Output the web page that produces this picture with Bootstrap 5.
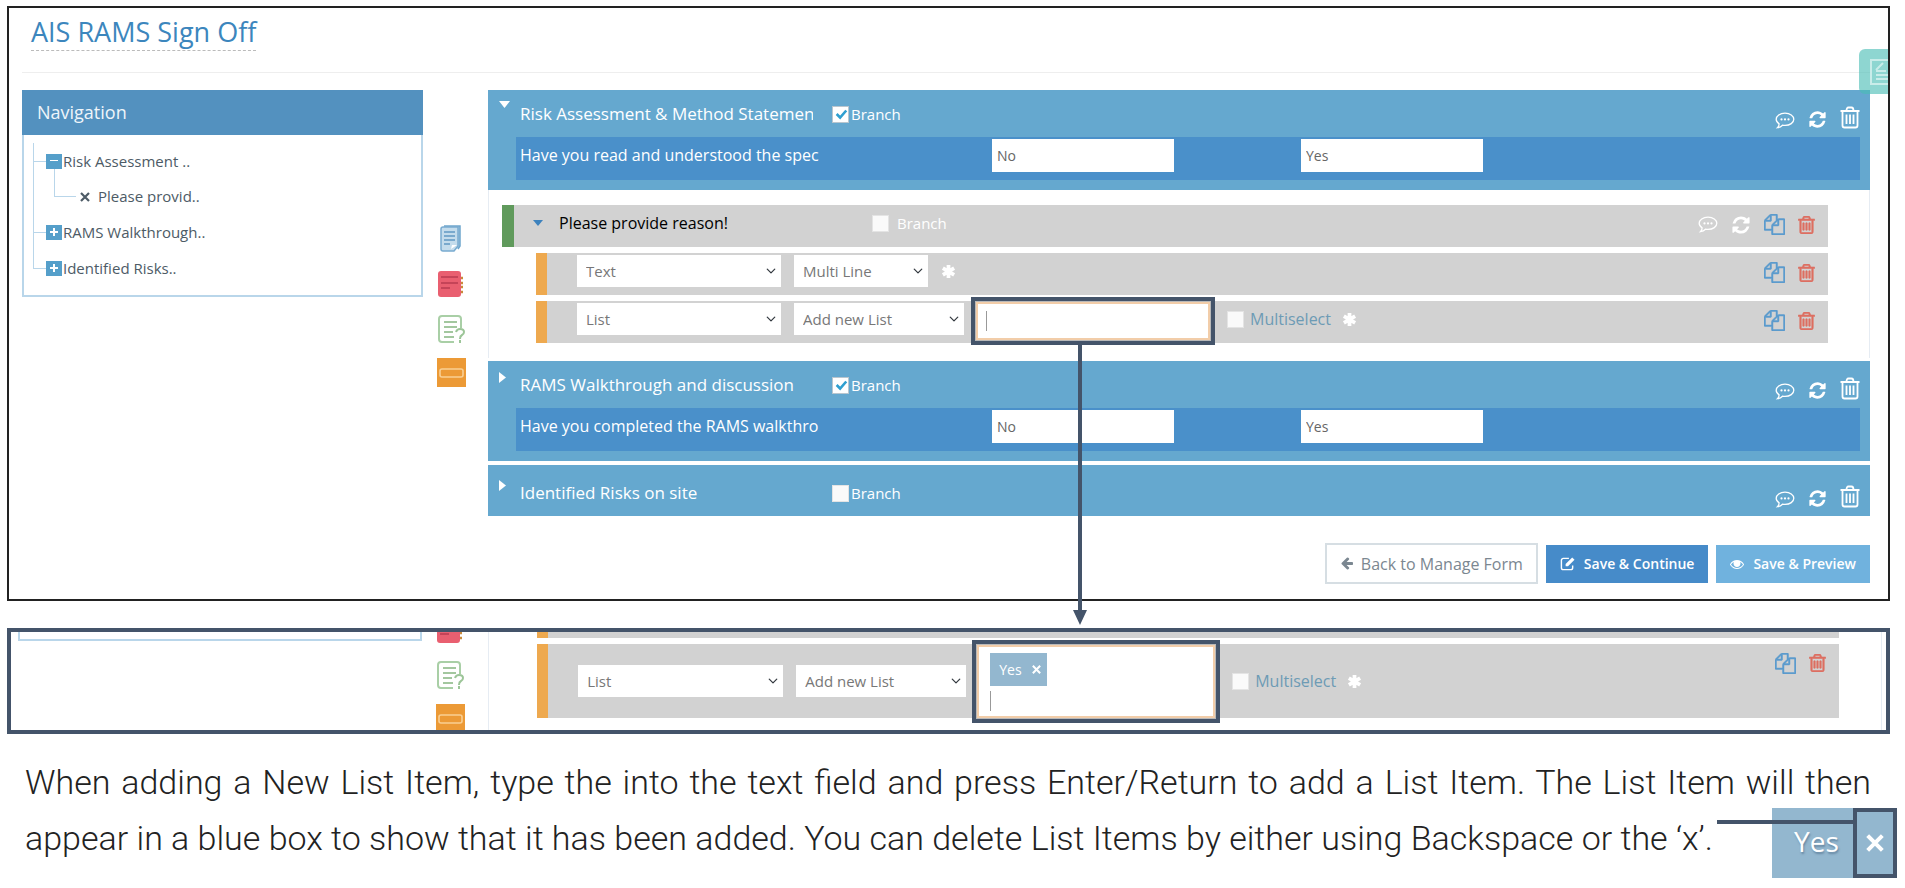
<!DOCTYPE html>
<html lang="en">
<head>
<meta charset="utf-8">
<meta name="viewport" content="width=device-width, initial-scale=1">
<title>AIS RAMS Sign Off</title>
<link href="https://cdn.jsdelivr.net/npm/bootstrap@5.3.0/dist/css/bootstrap.min.css" rel="stylesheet">
<style>
  :root { --slate: #44546a; --sky: #65a8cf; --deep: #4a90ca; --ash: #d2d2d2; --line: #b9d6ea; }
  body { font-family: "Open Sans", "Noto Sans", sans-serif; font-size: 15px; color: #555; background: #fff; padding: 6px 15px 0 7px; min-height: 100vh; }
  svg { display: block; fill: currentColor; }
  .icon-btn { border: 0; background: none; padding: 0; color: inherit; display: block; }

  .screen { border: 2px solid #222; padding: 0 18px 15px 13px; }
  .form-title { font-size: 27px; line-height: 36px; font-weight: 500; color: #3c86bd; margin: 6px 0 0 9px; border-bottom: 1px dashed #bbb; display: inline-block; }
  .title-bar { border-bottom: 1px solid #eee; height: 65px; margin-bottom: 17px; }
  .side-tab { position: absolute; top: 41px; right: 0; width: 29px; height: 45px; overflow: hidden; border-radius: 6px 0 0 6px; background: rgba(72, 189, 180, .62); color: #c9ece9; padding: 0 0 0 11px; z-index: 2; }

  .work { display: grid; grid-template-columns: minmax(0, 401fr) 65px minmax(0, 1382fr); align-items: start; }
  .nav-box { border: 2px solid var(--line); border-top: 0; }
  .nav-box h2 { font-size: 18px; line-height: 45px; margin: 0 -2px; padding-left: 15px; background: #5391bf; color: #eef5fa; font-weight: 400; }
  .tree { list-style: none; margin: 8px 0 9px 9px; padding: 0; color: #4d5b66; font-size: 15px; }
  .tree ul { list-style: none; margin: 0; padding: 0; }
  .tree li { position: relative; }
  .tree .node { display: flex; align-items: center; height: 36px; padding-left: 13px; }
  .tree > li::before { content: ""; position: absolute; left: 0; top: 0; bottom: 0; border-left: 1px solid var(--line); }
  .tree > li:last-child::before { bottom: 50%; }
  .tree > li > .node::before { content: ""; position: absolute; left: 0; top: 18px; width: 13px; border-top: 1px solid var(--line); }
  .tree ul .node { padding-left: 46px; height: 35px; gap: 7px; }
  .tree ul .node::before { content: ""; position: absolute; left: 21px; top: -10px; width: 22px; height: 28px; border: solid var(--line); border-width: 0 0 1px 1px; }
  .toggle { width: 16px; height: 15px; background: #559fca; color: #fff; border: 0; padding: 0; display: grid; place-items: center; margin-right: 1px; }
  .tree a { color: inherit; text-decoration: none; }

  .tools { padding: 134px 8px 0 0; gap: 15px; }

  .group-head { background: var(--sky); color: #fff; padding: 0 10px 10px 28px; }
  .next-head { margin-top: 3px; }
  .head-row { display: flex; align-items: flex-start; height: 47px; padding-left: 4px; position: relative; }
  .head-row .mark-tri { position: absolute; left: -17px; top: 11px; }
  .plain-input { border: 0; background: none; color: inherit; padding: 0; width: 293px; line-height: 24px; height: 24px; outline: 0; font-size: 16px; }
  .head-row .plain-input { font-size: 17px; }
  .head-row .plain-input, .head-row .tick { margin-top: 12px; }
  .tick { display: flex; align-items: center; line-height: 24px; }
  .tick input { appearance: none; width: 17px; height: 17px; margin: 0; background: #fafafa; border: 1px solid #e4e4e4; flex: none; }
  .tick input:checked { background: #fff url("data:image/svg+xml,%3Csvg xmlns='http://www.w3.org/2000/svg' viewBox='0 0 16 16'%3E%3Cpath d='M3 8l4 4 7-8' fill='none' stroke='%232f9fd0' stroke-width='3'/%3E%3C/svg%3E") center/14px no-repeat; border-color: #b9c6cf; }
  .head-row .tick { margin-left: 19px; gap: 2px; }
  .head-icons { display: flex; align-items: flex-end; gap: 13px; margin-left: auto; padding-top: 16px; height: 39px; }
  .question { display: grid; grid-template-columns: 476fr 309fr 559fr; background: var(--deep); height: 43px; padding-top: 2px; }
  .question .plain-input { margin: 4px 0 0 4px; width: 302px; }
  .answer { width: 182px; height: 33px; border: 0; padding: 0 5px; color: #666; background: #fff; font-size: 14px; border-radius: 0; }
  .group-body { border: 1px solid #e6ecf3; border-top: 0; border-bottom: 0; padding: 15px 41px 15px 13px; display: grid; gap: 6px; }
  .item-row { display: flex; align-items: flex-start; background: var(--ash); min-height: 42px; padding: 2px 13px 0 30px; border-left: 11px solid #eea94f; margin-left: 34px; }
  .item-row.lead-row { border-left: 12px solid #609a5c; margin-left: 0; padding-left: 19px; color: #fff; }
  .item-row .tick { height: 32px; }
  .pick { width: 204px; height: 32px; border: 0; border-radius: 0; padding: 0 24px 0 9px; font-size: 15px; color: #777; background-color: #fff; background-position: right 5px center; background-size: 10px; margin-right: 13px; }
  .pick.mid { width: 134px; }
  .star { height: 32px; display: flex; align-items: center; color: #fff; }
  .row-icons { display: flex; align-items: center; gap: 13px; margin-left: auto; height: 35px; }
  .blue { color: #5b9bcd; } .red { color: #dd6f62; }
  .callout-box { position: relative; width: 244px; margin: -6px 12px -6px -6px; border: 4px solid var(--slate); background: #b9b9b9; padding: 1px; }
  .entry { display: block; width: 100%; height: 38px; border: 2px solid #f2cda9; border-radius: 0; background: #fff linear-gradient(#999, #999) 8px center / 1px 20px no-repeat; padding: 0 10px; outline: 0; }
  .pointer { position: absolute; left: 98px; top: 100%; width: 14px; color: var(--slate); z-index: 3; }
  .multi { color: #6d9bb5; gap: 6px; margin-right: 11px; font-size: 16px; }
  .foot-btns { display: flex; justify-content: flex-end; align-items: center; gap: 8px; padding-top: 27px; }
  .foot-btns .btn { border-radius: 0; font-size: 14px; line-height: 20px; height: 38px; color: #fff; padding: 0 14px; display: flex; align-items: center; gap: 9px; border: 0; font-weight: 600; }
  .foot-btns .go { background: #468bc9; }
  .foot-btns .look { background: #70b2de; }
  .foot-btns .back { height: 41px; font-size: 16px; color: #7b8791; background: #fff; border: 2px solid #d6dee3; padding: 0 13px; gap: 7px; font-weight: 400; }

  .strip { margin-top: 27px; border: 4px solid var(--slate); height: 106px; overflow: hidden; }
  .strip-grid { display: grid; grid-template-columns: minmax(0, 404fr) 66px minmax(0, 1393fr); padding: 0 4px 0 7px; height: 100%; }
  .strip .rest { border: 2px solid var(--line); border-top: 0; height: 9px; }
  .strip .tools { padding: 0 9px 0 0; margin-top: -18px; }
  .strip .rows { border: solid #e6ecf3; border-width: 0 1px; padding: 0 42px 0 14px; display: grid; gap: 6px; align-content: start; }
  .strip .stub { min-height: 6px; height: 6px; padding: 0; }
  .strip .tall { min-height: 74px; align-items: center; padding-top: 0; }
  .strip .tall .row-icons { align-self: flex-start; height: 38px; }
  .strip .callout-box { width: 248px; margin: -5px 12px -5px -7px; }
  .strip .pick { width: 205px; }
  .pick.wide, .strip .pick.wide { width: 170px; }
  .entry-area { border: 2px solid #f2cda9; background: #fff; padding: 6px 11px; height: 73px; }
  .entry-area input { display: block; width: 100%; height: 22px; border: 0; padding: 0; margin-top: 4px; background: linear-gradient(#999, #999) 0 center / 1px 20px no-repeat; outline: 0; }
  .chip { display: inline-flex; align-items: center; background: #93b7cf; color: #fff; width: 57px; height: 33px; padding: 0 5px 0 9px; justify-content: space-between; font-size: 14px; vertical-align: top; }

  .note { position: relative; margin: 20px 19px 0 18px; }
  .note p { font-family: Roboto, "Liberation Sans", sans-serif; font-weight: 300; font-size: 34px; line-height: 56px; color: #222; margin: 0; }
  .note .spread { display: block; text-align: justify; text-align-last: justify; }
  .big-chip { position: absolute; right: -26px; bottom: -12px; width: 125px; height: 70px; background: #93b7cf; color: #fff; display: flex; }
  .big-chip span { flex: 1; font-size: 28px; line-height: 66px; padding-left: 22px; text-shadow: 1px 2px 2px rgba(60, 90, 120, .5); }
  .big-chip button { width: 44px; border: 4px solid var(--slate); background: none; color: #fff; padding: 0; display: grid; place-items: center; }
  .big-chip::before { content: ""; position: absolute; left: -55px; right: 44px; top: 12px; border-top: 4px solid var(--slate); }
</style>
</head>
<body>
<svg width="0" height="0" class="position-absolute" aria-hidden="true">
  <symbol id="refresh" viewBox="0 0 1792 1792"><path d="M1639 1056q0 5-1 7-64 268-268 434.500t-478 166.500q-146 0-282.500-55t-243.500-157l-129 129q-19 19-45 19t-45-19-19-45v-448q0-26 19-45t45-19h448q26 0 45 19t19 45-19 45l-137 137q71 66 161 102t187 36q134 0 250-65t186-179q11-17 53-117 8-23 30-23h192q13 0 22.500 9.500t9.500 22.500zm25-800v448q0 26-19 45t-45 19h-448q-26 0-45-19t-19-45 19-45l138-138q-148-137-349-137-134 0-250 65t-186 179q-11 17-53 117-8 23-30 23h-199q-13 0-22.500-9.500t-9.500-22.500v-7q65-268 270-434.500t480-166.500q146 0 284 55.500t245 156.500l130-129q19-19 45-19t45 19 19 45z"/></symbol>
  <symbol id="trash" viewBox="192 128 1408 1536"><path d="M704 736v576q0 14-9 23t-23 9h-64q-14 0-23-9t-9-23v-576q0-14 9-23t23-9h64q14 0 23 9t9 23zm256 0v576q0 14-9 23t-23 9h-64q-14 0-23-9t-9-23v-576q0-14 9-23t23-9h64q14 0 23 9t9 23zm256 0v576q0 14-9 23t-23 9h-64q-14 0-23-9t-9-23v-576q0-14 9-23t23-9h64q14 0 23 9t9 23zm128 724v-948h-896v948q0 22 7 40.500t14.500 27 10.500 8.500h832q3 0 10.500-8.500t14.500-27 7-40.500zm-672-1076h448l-48-117q-7-9-17-11h-317q-10 2-17 11zm928 32v64q0 14-9 23t-23 9h-96v948q0 83-47 143.500t-113 60.500h-832q-66 0-113-58.500t-47-141.500v-952h-96q-14 0-23-9t-9-23v-64q0-14 9-23t23-9h309l70-167q15-37 54-63t79-26h320q40 0 79 26t54 63l70 167h309q14 0 23 9t9 23z" stroke="currentColor" stroke-width="50"/></symbol>
  <symbol id="bin" viewBox="0 0 20 22"><path d="M.5 4.500h19M6.500 4.500q0-3.500 2-3.500h3q2 0 2 3.500M2.500 5v14q0 2 2 2h11q2 0 2-2V5M6.500 8v9.500M10 8v9.500M13.500 8v9.500" fill="none" stroke="currentColor" stroke-width="1.800"/></symbol>
  <symbol id="files" viewBox="0 0 1792 1792"><path d="M1696 384q40 0 68 28t28 68v1216q0 40-28 68t-68 28h-960q-40 0-68-28t-28-68v-288h-544q-40 0-68-28t-28-68v-672q0-40 20-88t48-76l408-408q28-28 76-48t88-20h416q40 0 68 28t28 68v328q68-40 128-40h416zm-544 213l-299 299h299v-299zm-640-384l-299 299h299v-299zm196 647l316-316v-416h-384v416q0 40-28 68t-68 28h-416v640h512v-256q0-40 20-88t48-76zm956 804v-1152h-384v416q0 40-28 68t-68 28h-416v640h896z" stroke="currentColor" stroke-width="40"/></symbol>
  <symbol id="comment" viewBox="0 0 20 17"><path d="M10 1.200c5 0 8.800 2.700 8.800 6.100s-3.800 6.100-8.800 6.100q-1.300 0-2.500-.2-2 2.100-5 2.500 1.600-1.600 1.600-3.800C2.200 10.700 1.200 9 1.200 7.300c0-3.400 3.800-6.100 8.800-6.100z" fill="none" stroke="currentColor" stroke-width="1.300"/><circle cx="6.500" cy="7.400" r="1.100"/><circle cx="10" cy="7.400" r="1.100"/><circle cx="13.500" cy="7.400" r="1.100"/></symbol>
  <symbol id="star" viewBox="0 0 16 16"><path d="M8 1v14M2 4.500l12 7M14 4.500l-12 7" stroke="currentColor" stroke-width="4"/></symbol>
  <symbol id="cross" viewBox="0 0 12 12"><path d="M2 2l8 8M10 2l-8 8" stroke="currentColor" stroke-width="2.200"/></symbol>
  <symbol id="left" viewBox="0 0 1792 1920"><path d="M1664 896v128q0 53-32.500 90.500t-84.500 37.500h-704l293 294q38 36 38 90t-38 90l-75 76q-37 37-90 37-52 0-91-37l-651-652q-37-37-37-90 0-52 37-91l651-650q38-38 91-38 52 0 90 38l75 74q38 38 38 91t-38 91l-293 293h704q52 0 84.500 37.500t32.500 90.500z"/></symbol>
  <symbol id="edit" viewBox="0 0 16 16"><path d="M9.500 2.500H3.500a2 2 0 0 0-2 2v8a2 2 0 0 0 2 2h8a2 2 0 0 0 2-2V10" fill="none" stroke="currentColor" stroke-width="1.500"/><path d="M6 8.500L13 1.500l2.500 2.500-7 7H6z"/></symbol>
  <symbol id="eye" viewBox="0 0 1792 1792"><path d="M1664 960q-152-236-381-353 61 104 61 225 0 185-131.500 316.500t-316.500 131.500-316.500-131.500-131.500-316.500q0-121 61-225-229 117-381 353 133 205 333.500 326.500t434.500 121.500 434.500-121.500 333.500-326.500zm128 0q0 34-20 69-140 230-376.500 368.500t-499.500 138.500-499.500-139-376.500-368q-20-35-20-69t20-69q140-229 376.500-368t499.500-139 499.500 139 376.500 368q20 35 20 69z"/><circle cx="896" cy="850" r="330"/></symbol>
  <symbol id="pages" viewBox="0 0 29 29"><path d="M7 2h16v20l-2 3" fill="#a9cbe2" stroke="#6fa6cd" stroke-width="1.500"/><path d="M4 5q0-2 2-2h15v19l-4 5H6q-2 0-2-2z" fill="#c4dcec" stroke="#78abd0" stroke-width="1.500"/><path d="M7 8h11M7 12h11M7 16h11M7 20h6" stroke="#6098c2" stroke-width="1.500"/><path d="M14 25l1-4h5z" fill="#fff"/></symbol>
  <symbol id="book" viewBox="0 0 29 29"><path d="M22 10h4M22 15h4M22 19h4M22 24h4" stroke="#c98a3a" stroke-width="2.500"/><rect x="1" y="3" width="23" height="26" rx="3" fill="#e95f70"/><path d="M4 9h17M4 15h17M4 20h9" stroke="#b93c50" stroke-width="1.500"/></symbol>
  <symbol id="quiz" viewBox="0 -2 29 31"><path d="M24 14V5q0-3-3-3H5Q2 2 2 5v20q0 3 3 3h12" fill="none" stroke="#a9cfa6" stroke-width="2"/><path d="M7 8h13M7 13h13M7 18h9M7 23h10" stroke="#a3c79f" stroke-width="2"/><path d="M19 18q1-3 4-3 4 0 4 3 0 2-2 3t-2 4M23 26v3" fill="none" stroke="#9cc598" stroke-width="2"/></symbol>
  <symbol id="field" viewBox="0 0 29 29"><path d="M0 0h29v29H0z" fill="#ec9a36"/><rect x="3" y="11" width="23" height="8" rx="2" fill="none" stroke="#f9cf93" stroke-width="1.600"/></symbol>
</svg>

<main>
  <section class="screen position-relative">
    <header class="title-bar"><h1 class="form-title">AIS RAMS Sign Off</h1></header>
    <button class="icon-btn side-tab" aria-label="Notes"><svg width="26" height="26" viewBox="0 0 26 26"><path d="M1 1h24v24H1zM6 11l7-7M6 12h10M6 16h14M6 20h14" fill="none" stroke="currentColor" stroke-width="2"/></svg></button>

    <div class="work">
      <nav class="nav-box">
        <h2>Navigation</h2>
        <ul class="tree">
          <li><div class="node"><button class="toggle" aria-label="Collapse"><svg width="8" height="8"><path d="M0 3h8v1H0z"/></svg></button><a href="#">Risk Assessment ..</a></div>
            <ul><li><div class="node"><svg width="12" height="12"><use href="#cross"/></svg><a href="#">Please provid..</a></div></li></ul>
          </li>
          <li><div class="node"><button class="toggle" aria-label="Expand"><svg width="8" height="8"><path d="M0 3h3V0h2v3h3v2H5v3H3V5H0z"/></svg></button><a href="#">RAMS Walkthrough..</a></div></li>
          <li><div class="node"><button class="toggle" aria-label="Expand"><svg width="8" height="8"><path d="M0 3h3V0h2v3h3v2H5v3H3V5H0z"/></svg></button><a href="#">Identified Risks..</a></div></li>
        </ul>
      </nav>

      <div class="tools d-flex flex-column align-items-center">
        <button class="icon-btn" aria-label="Pages"><svg width="29" height="29"><use href="#pages"/></svg></button>
        <button class="icon-btn" aria-label="Notebook"><svg width="29" height="29"><use href="#book"/></svg></button>
        <button class="icon-btn" aria-label="Question"><svg width="29" height="31"><use href="#quiz"/></svg></button>
        <button class="icon-btn" aria-label="Field"><svg width="29" height="29"><use href="#field"/></svg></button>
      </div>

      <div>
        <section>
          <div class="group-head">
            <div class="head-row">
              <svg class="mark-tri" width="11" height="7"><path d="M0 0h11L5.500 7z"/></svg>
              <input class="plain-input" aria-label="Section" value="Risk Assessment &amp; Method Statement">
              <label class="tick"><input type="checkbox" checked>Branch</label>
              <div class="head-icons">
                <button class="icon-btn" aria-label="Comment"><svg width="20" height="17"><use href="#comment"/></svg></button>
                <button class="icon-btn" aria-label="Refresh"><svg width="19" height="19"><use href="#refresh"/></svg></button>
                <button class="icon-btn" aria-label="Delete"><svg width="20" height="23"><use href="#bin"/></svg></button>
              </div>
            </div>
            <div class="question">
              <input class="plain-input" aria-label="Question" value="Have you read and understood the spec">
              <input class="answer" aria-label="First answer" value="No">
              <input class="answer" aria-label="Second answer" value="Yes">
            </div>
          </div>
          <div class="group-body">
            <div class="item-row lead-row">
              <svg class="me-3" style="color:#3d82bd" width="10" height="32"><path d="M0 13h10l-5 6z"/></svg>
              <input class="plain-input mt-1 text-black" aria-label="Sub section" value="Please provide reason!">
              <label class="tick gap-2 ms-3 ps-1"><input type="checkbox">Branch</label>
              <div class="row-icons">
                <button class="icon-btn" aria-label="Comment"><svg width="20" height="17"><use href="#comment"/></svg></button>
                <button class="icon-btn" aria-label="Refresh"><svg width="20" height="20"><use href="#refresh"/></svg></button>
                <button class="icon-btn blue" aria-label="Copy"><svg width="21" height="21"><use href="#files"/></svg></button>
                <button class="icon-btn red" aria-label="Delete"><svg width="17" height="18"><use href="#trash"/></svg></button>
              </div>
            </div>
            <div class="item-row">
              <select class="form-select pick" aria-label="Type"><option>Text</option></select>
              <select class="form-select pick mid" aria-label="Lines"><option>Multi Line</option></select>
              <span class="star"><svg width="15" height="15"><use href="#star"/></svg></span>
              <div class="row-icons">
                <button class="icon-btn blue" aria-label="Copy"><svg width="21" height="21"><use href="#files"/></svg></button>
                <button class="icon-btn red" aria-label="Delete"><svg width="17" height="18"><use href="#trash"/></svg></button>
              </div>
            </div>
            <div class="item-row">
              <select class="form-select pick" aria-label="Type"><option>List</option></select>
              <select class="form-select pick wide" aria-label="List"><option>Add new List</option></select>
              <div class="callout-box">
                <input class="entry" aria-label="List item">
                <svg class="pointer" height="284" viewBox="0 0 14 284"><path d="M5 0h4v269h5l-7 15-7-15h5z"/></svg>
              </div>
              <label class="tick multi"><input type="checkbox">Multiselect</label>
              <span class="star"><svg width="15" height="15"><use href="#star"/></svg></span>
              <div class="row-icons">
                <button class="icon-btn blue" aria-label="Copy"><svg width="21" height="21"><use href="#files"/></svg></button>
                <button class="icon-btn red" aria-label="Delete"><svg width="17" height="18"><use href="#trash"/></svg></button>
              </div>
            </div>
          </div>
        </section>

        <section class="group-head next-head">
          <div class="head-row">
            <svg class="mark-tri" width="7" height="11"><path d="M0 0v11l7-5.500z"/></svg>
            <input class="plain-input" aria-label="Section" value="RAMS Walkthrough and discussion">
            <label class="tick"><input type="checkbox" checked>Branch</label>
            <div class="head-icons">
              <button class="icon-btn" aria-label="Comment"><svg width="20" height="17"><use href="#comment"/></svg></button>
              <button class="icon-btn" aria-label="Refresh"><svg width="19" height="19"><use href="#refresh"/></svg></button>
              <button class="icon-btn" aria-label="Delete"><svg width="20" height="23"><use href="#bin"/></svg></button>
            </div>
          </div>
          <div class="question">
            <input class="plain-input" aria-label="Question" value="Have you completed the RAMS walkthro">
            <input class="answer" aria-label="First answer" value="No">
            <input class="answer" aria-label="Second answer" value="Yes">
          </div>
        </section>

        <section class="group-head mt-1 pt-1 pb-0">
          <div class="head-row pb-1">
            <svg class="mark-tri" width="7" height="11"><path d="M0 0v11l7-5.500z"/></svg>
            <input class="plain-input" aria-label="Section" value="Identified Risks on site">
            <label class="tick"><input type="checkbox">Branch</label>
            <div class="head-icons">
              <button class="icon-btn" aria-label="Comment"><svg width="20" height="17"><use href="#comment"/></svg></button>
              <button class="icon-btn" aria-label="Refresh"><svg width="19" height="19"><use href="#refresh"/></svg></button>
              <button class="icon-btn" aria-label="Delete"><svg width="20" height="23"><use href="#bin"/></svg></button>
            </div>
          </div>
        </section>

        <div class="foot-btns">
          <button class="btn back"><svg width="14" height="15"><use href="#left"/></svg>Back to Manage Form</button>
          <button class="btn go"><svg width="15" height="15"><use href="#edit"/></svg>Save &amp; Continue</button>
          <button class="btn look"><svg width="14" height="14"><use href="#eye"/></svg>Save &amp; Preview</button>
        </div>
      </div>
    </div>
  </section>

  <section class="strip">
    <div class="strip-grid">
      <div class="rest"></div>
      <div class="tools d-flex flex-column align-items-center">
        <svg class="flex-shrink-0" width="29" height="29"><use href="#book"/></svg>
        <svg class="flex-shrink-0" width="29" height="31"><use href="#quiz"/></svg>
        <svg class="flex-shrink-0" width="29" height="29"><use href="#field"/></svg>
      </div>
      <div class="rows">
        <div class="item-row stub"></div>
        <div class="item-row tall">
          <select class="form-select pick" aria-label="Type"><option>List</option></select>
          <select class="form-select pick wide" aria-label="List"><option>Add new List</option></select>
          <div class="callout-box">
            <div class="entry-area">
              <span class="chip">Yes <button class="icon-btn" aria-label="Remove Yes"><svg width="11" height="11"><use href="#cross"/></svg></button></span>
              <input aria-label="List item">
            </div>
          </div>
          <label class="tick multi"><input type="checkbox">Multiselect</label>
          <span class="star"><svg width="15" height="15"><use href="#star"/></svg></span>
          <div class="row-icons">
            <button class="icon-btn blue" aria-label="Copy"><svg width="21" height="21"><use href="#files"/></svg></button>
            <button class="icon-btn red" aria-label="Delete"><svg width="17" height="18"><use href="#trash"/></svg></button>
          </div>
        </div>
      </div>
    </div>
  </section>

  <section class="note">
    <p><span class="spread">When adding a New List Item, type the into the text field and press Enter/Return to add a List Item. The List Item will then</span>
    <span>appear in a blue box to show that it has been added. You can delete List Items by either using Backspace or the ‘x’.</span></p>
    <div class="big-chip"><span>Yes</span><button aria-label="Remove Yes"><svg width="22" height="22"><use href="#cross"/></svg></button></div>
  </section>
</main>
<script src="https://cdn.jsdelivr.net/npm/bootstrap@5.3.0/dist/js/bootstrap.bundle.min.js"></script>
</body>
</html>
